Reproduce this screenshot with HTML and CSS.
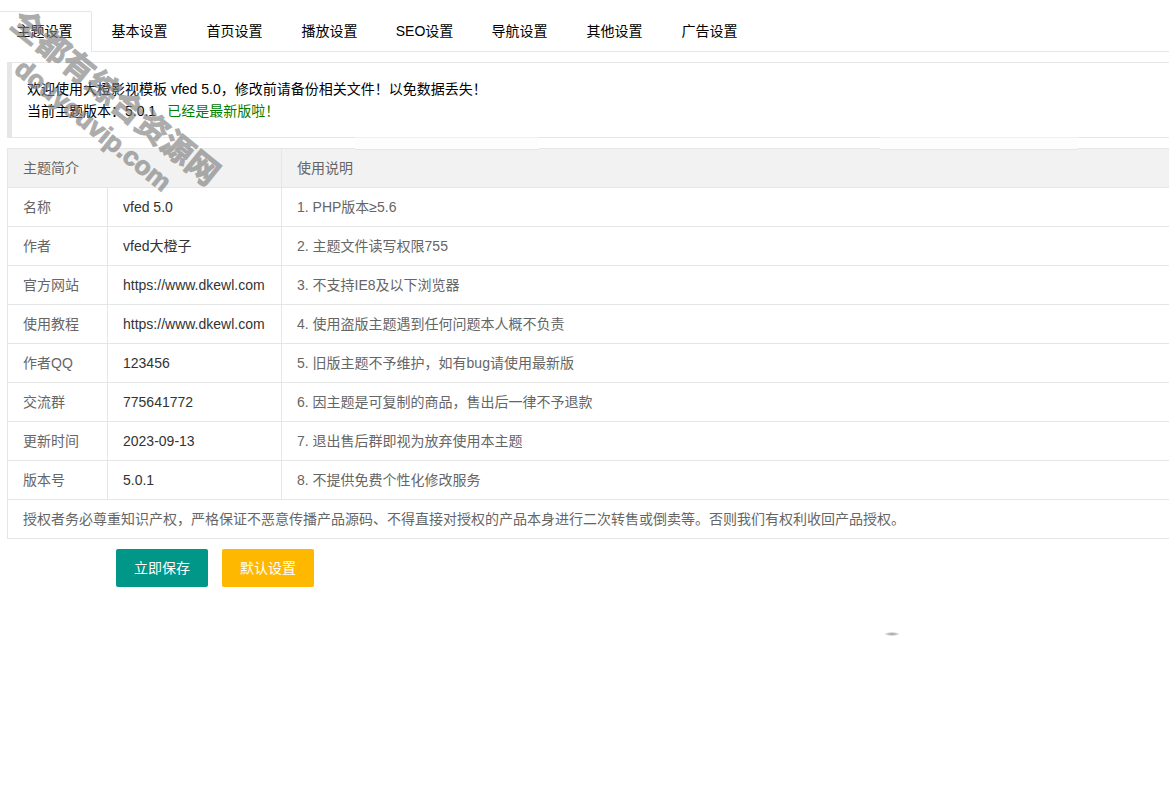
FILE: index.html
```html
<!DOCTYPE html>
<html lang="zh-CN">
<head>
<meta charset="utf-8">
<title>主题设置</title>
<link rel="stylesheet" href="styles.css">
</head>
<body>
<nav class="tabs">
  <a class="tab active" href="#theme">主题设置</a>
  <a class="tab" href="#basic">基本设置</a>
  <a class="tab" href="#home">首页设置</a>
  <a class="tab" href="#play">播放设置</a>
  <a class="tab" href="#seo">SEO设置</a>
  <a class="tab" href="#nav">导航设置</a>
  <a class="tab" href="#other">其他设置</a>
  <a class="tab" href="#ads">广告设置</a>
</nav>
<main class="content">
  <blockquote class="notice">
    <p>欢迎使用大橙影视模板 vfed 5.0，修改前请备份相关文件！以免数据丢失！</p>
    <p>当前主题版本：5.0.1<span class="latest">已经是最新版啦！</span></p>
  </blockquote>
  <table class="info">
    <colgroup><col class="col-name"><col class="col-value"><col></colgroup>
    <thead>
      <tr><th colspan="2">主题简介</th><th>使用说明</th></tr>
    </thead>
    <tbody>
      <tr><td>名称</td><td class="value">vfed 5.0</td><td>1. PHP版本≥5.6</td></tr>
      <tr><td>作者</td><td class="value">vfed大橙子</td><td>2. 主题文件读写权限755</td></tr>
      <tr><td>官方网站</td><td><a class="value" href="https://www.dkewl.com">https://www.dkewl.com</a></td><td>3. 不支持IE8及以下浏览器</td></tr>
      <tr><td>使用教程</td><td><a class="value" href="https://www.dkewl.com">https://www.dkewl.com</a></td><td>4. 使用盗版主题遇到任何问题本人概不负责</td></tr>
      <tr><td>作者QQ</td><td class="value">123456</td><td>5. 旧版主题不予维护，如有bug请使用最新版</td></tr>
      <tr><td>交流群</td><td class="value">775641772</td><td>6. 因主题是可复制的商品，售出后一律不予退款</td></tr>
      <tr><td>更新时间</td><td class="value">2023-09-13</td><td>7. 退出售后群即视为放弃使用本主题</td></tr>
      <tr><td>版本号</td><td class="value">5.0.1</td><td>8. 不提供免费个性化修改服务</td></tr>
      <tr><td colspan="3">授权者务必尊重知识产权，严格保证不恶意传播产品源码、不得直接对授权的产品本身进行二次转售或倒卖等。否则我们有权利收回产品授权。</td></tr>
    </tbody>
  </table>
  <div class="actions">
    <button class="btn save" type="submit">立即保存</button>
    <button class="btn reset" type="button">默认设置</button>
  </div>
</main>
<div class="fade fade-left"></div>
<div class="fade fade-right"></div>
<div class="speck"></div>
<div class="watermark"><div>全都有综合资源网</div><div class="domain">douyouvip.com</div></div>
</body>
</html>
```

FILE: styles.css
```css
* { box-sizing: border-box; }
body {
  margin: 0;
  padding-top: 11px;
  min-height: 100vh;
  position: relative;
  background: #fff;
  color: #000;
  font: 14px/22px "Liberation Sans", "Noto Sans CJK SC", sans-serif;
}
p { margin: 0; }
a { color: inherit; text-decoration: none; }
.tabs {
  display: flex;
  height: 41px;
  margin-left: -3px;
  border-bottom: 1px solid #e6e6e6;
}
.tab {
  min-width: 95px;
  height: 40px;
  padding: 0 15px;
  line-height: 40px;
  text-align: center;
}
.tab.active {
  height: 41px;
  border: 1px solid #e6e6e6;
  border-bottom: 0;
  border-radius: 2px 2px 0 0;
  background: #fff;
  line-height: 38px;
}
.content { padding: 10px 0 0 7px; }
.notice {
  margin: 0 0 10px;
  padding: 15px;
  border: 1px solid #e6e6e6;
  border-left-width: 5px;
  border-right: 0;
}
.latest { margin-left: 11px; color: #008000; }
.info {
  width: 100%;
  table-layout: fixed;
  border-collapse: collapse;
  color: #666;
  line-height: 20px;
}
.col-name { width: 100px; }
.col-value { width: 174px; }
.info th, .info td {
  padding: 9px 15px;
  border: 1px solid #e6e6e6;
  font-weight: 400;
  text-align: left;
}
.info th:last-child, .info td:last-child { border-right: 0; }
.info thead { background: #f2f2f2; }
.info .value { color: #333; }
.actions {
  display: flex;
  gap: 14px;
  padding: 10px 0 0 109px;
}
.btn {
  height: 38px;
  padding: 0 18px;
  border: 0;
  border-radius: 2px;
  color: #fff;
  font: inherit;
  cursor: pointer;
}
.save { background: #009688; }
.reset { background: #ffb800; }
.fade {
  position: absolute;
  top: 137px;
  height: 13px;
  border-top: 1px solid #f0f0f0;
  border-bottom: 1px solid #e6e6e6;
  background: #fdfdfd;
  pointer-events: none;
}
.fade-left { left: 355px; width: 184px; }
.fade-right { left: 880px; width: 198px; }
.speck {
  position: absolute;
  left: 884px;
  top: 632px;
  width: 16px;
  height: 4px;
  background: radial-gradient(closest-side, #999, #ccc 60%, transparent);
}
.watermark {
  position: absolute;
  left: -24px;
  top: 77px;
  width: 256px;
  transform: rotate(39deg);
  opacity: 0.65;
  color: #808080;
  -webkit-text-stroke: 1px #808080;
  font-size: 32px;
  font-weight: 700;
  line-height: 35px;
  text-align: center;
  white-space: nowrap;
  pointer-events: none;
}
.domain { font-size: 26px; }
```
